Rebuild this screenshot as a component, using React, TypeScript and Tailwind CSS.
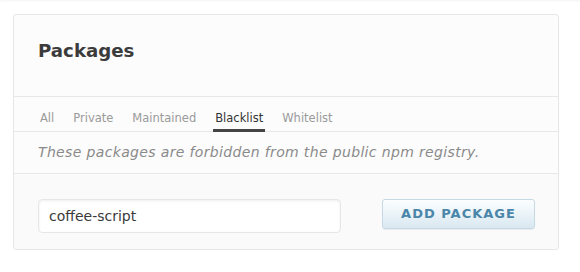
import React from "react";

const tabs = ["All", "Private", "Maintained", "Blacklist", "Whitelist"];

export default function App() {
  return (
    <div
      className="w-[580px] h-[272px] bg-white pt-[14px] shadow-[inset_0_3px_3px_-2px_rgba(0,0,0,0.05)]"
      style={{ fontFamily: '"DejaVu Sans", sans-serif' }}
    >
      <div className="ml-[13px] w-[546px] border border-[#e6e6e6] rounded-[3px] bg-[#fcfcfc] overflow-hidden">
        <div className="border-b border-[#e8e8e8] pl-[24px] pt-[25px] pb-[34px]">
          <h2 className="text-[18.2px] leading-[22px] font-bold text-[#3b3b3b]">Packages</h2>
        </div>
        <div className="border-b border-[#e8e8e8] pl-[24px] flex gap-[15px]">
          {tabs.map((t) => {
            const active = t === "Blacklist";
            return (
              <div
                key={t}
                className={
                  active
                    ? "px-[2px] pt-[14px] pb-[4px] -mb-px border-b-[3px] border-[#444444] text-[11.5px] leading-[14px] text-[#333333]"
                    : "px-[2px] pt-[14px] pb-[4px] -mb-px border-b-[3px] border-transparent text-[11.5px] leading-[14px] text-[#9a9a9a]"
                }
              >
                {t}
              </div>
            );
          })}
        </div>
        <div className="border-b border-[#e8e8e8] pl-[24px] pt-[12px] pb-[12px]">
          <p className="italic text-[14px] tracking-[0.35px] leading-[17px] text-[#8a8a8a]">
            These packages are forbidden from the public npm registry.
          </p>
        </div>
        <div className="bg-[#fafafa] pl-[24px] pt-[25px] pb-[16px] flex items-start">
          <div className="w-[303px] h-[34px] bg-white border border-[#e6e6e6] rounded-[4px] shadow-[inset_0_1px_3px_rgba(0,0,0,0.07)] pl-[10px] flex items-center text-[14px] text-[#3a3a3a]">
            coffee-script
          </div>
          <button className="ml-[41px] w-[153px] h-[30px] rounded-[3px] border border-[#c5d9e5] bg-gradient-to-b from-[#fcfeff] to-[#d9e8f1] shadow-[0_1px_1px_rgba(0,0,0,0.06)] text-[13px] font-bold tracking-[1px] text-[#4a86a9] flex items-center justify-center">
            ADD PACKAGE
          </button>
        </div>
      </div>
    </div>
  );
}
